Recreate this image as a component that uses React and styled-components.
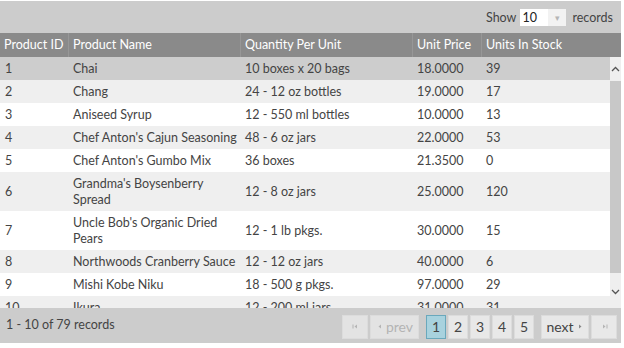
import React from 'react';
import styled, { createGlobalStyle } from 'styled-components';

const GlobalStyle = createGlobalStyle`
  body {
    margin: 0;
    background: #ffffff;
    font-family: Lato, "Open Sans", sans-serif;
  }
`;

const products = [
  { id: 1, name: 'Chai', qty: '10 boxes x 20 bags', price: '18.0000', stock: 39 },
  { id: 2, name: 'Chang', qty: '24 - 12 oz bottles', price: '19.0000', stock: 17 },
  { id: 3, name: 'Aniseed Syrup', qty: '12 - 550 ml bottles', price: '10.0000', stock: 13 },
  { id: 4, name: "Chef Anton's Cajun Seasoning", qty: '48 - 6 oz jars', price: '22.0000', stock: 53 },
  { id: 5, name: "Chef Anton's Gumbo Mix", qty: '36 boxes', price: '21.3500', stock: 0 },
  { id: 6, name: "Grandma's Boysenberry Spread", qty: '12 - 8 oz jars', price: '25.0000', stock: 120 },
  { id: 7, name: "Uncle Bob's Organic Dried Pears", qty: '12 - 1 lb pkgs.', price: '30.0000', stock: 15 },
  { id: 8, name: 'Northwoods Cranberry Sauce', qty: '12 - 12 oz jars', price: '40.0000', stock: 6 },
  { id: 9, name: 'Mishi Kobe Niku', qty: '18 - 500 g pkgs.', price: '97.0000', stock: 29 },
  { id: 10, name: 'Ikura', qty: '12 - 200 ml jars', price: '31.0000', stock: 31 },
];

const COLUMNS = '68px 172px 172px 69px 1fr';

const Arrow = ({ dir = 'right', bar = false }) => (
  <svg width="7" height="7" viewBox="0 0 7 7">
    {dir === 'right' ? (
      <path d="M2 1.5 L4.5 3.5 L2 5.5 Z" fill="currentColor" />
    ) : (
      <path d="M5 1.5 L2.5 3.5 L5 5.5 Z" fill="currentColor" />
    )}
    {bar && (dir === 'right'
      ? <rect x="5.5" y="1.5" width="1" height="4" fill="currentColor" />
      : <rect x="0.5" y="1.5" width="1" height="4" fill="currentColor" />)}
  </svg>
);

const Chevron = ({ up }) => (
  <svg width="9" height="6" viewBox="0 0 9 6">
    <path
      d={up ? 'M1 5 L4.5 1.5 L8 5' : 'M1 1 L4.5 4.5 L8 1'}
      fill="none"
      stroke="#555"
      strokeWidth="1.3"
    />
  </svg>
);

const App = () => {
  return (
    <>
      <GlobalStyle />
      <Grid>
        <Toolbar>
          <span>Show</span>
          <PageSize>
            <SizeValue>10</SizeValue>
            <SizeToggle>▾</SizeToggle>
          </PageSize>
          <span>records</span>
        </Toolbar>
        <HeaderRow>
          <HeaderCell>Product ID</HeaderCell>
          <HeaderCell>Product Name</HeaderCell>
          <HeaderCell>Quantity Per Unit</HeaderCell>
          <HeaderCell>Unit Price</HeaderCell>
          <HeaderCell>Units In Stock</HeaderCell>
        </HeaderRow>
        <Body>
          <Rows>
            {products.map((p, i) => (
              <Row key={p.id} $selected={i === 0} $alt={i % 2 === 1}>
                <Cell>{p.id}</Cell>
                <Cell>{p.name}</Cell>
                <Cell>{p.qty}</Cell>
                <Cell>{p.price}</Cell>
                <Cell>{p.stock}</Cell>
              </Row>
            ))}
          </Rows>
          <Scrollbar>
            <ScrollArrow $h={24}><Chevron up /></ScrollArrow>
            <Track>
              <Thumb />
            </Track>
            <ScrollArrow $h={16}><Chevron /></ScrollArrow>
          </Scrollbar>
        </Body>
        <Footer>
          <Summary>1 - 10 of 79 records</Summary>
          <Pager>
            <PagerGroup>
              <PageButton $disabled $w={26}><Arrow dir="left" bar /></PageButton>
              <PageButton $disabled $w={49}><Arrow dir="left" />prev</PageButton>
            </PagerGroup>
            <PagerGroup>
              {[1, 2, 3, 4, 5].map((n) => (
                <PageButton key={n} $active={n === 1} $w={20}>{n}</PageButton>
              ))}
            </PagerGroup>
            <PagerGroup>
              <PageButton $w={48}>next<Arrow /></PageButton>
              <PageButton $w={26} $faint><Arrow bar /></PageButton>
            </PagerGroup>
          </Pager>
        </Footer>
      </Grid>
    </>
  );
};

const Grid = styled.div`
  width: 621px;
  margin-top: 1px;
  background: #cccccc;
  color: #444444;
  font-size: 12.5px;
  display: flex;
  flex-direction: column;
`;

const Toolbar = styled.div`
  height: 32px;
  display: flex;
  justify-content: flex-end;
  align-items: center;
  gap: 4px;
  padding-right: 8px;
  color: #444444;
`;

const PageSize = styled.div`
  display: flex;
  height: 17px;
  background: #ffffff;
  margin-right: 2px;
`;

const SizeValue = styled.div`
  width: 26px;
  padding-left: 2px;
  line-height: 17px;
  color: #222222;
`;

const SizeToggle = styled.div`
  width: 18px;
  display: flex;
  align-items: center;
  justify-content: center;
  background: #f2f2f2;
  color: #b5b5b5;
  font-size: 9px;
`;

const HeaderRow = styled.div`
  display: grid;
  grid-template-columns: ${COLUMNS};
  height: 24px;
  background: #8a8a8a;
  color: #ffffff;
`;

const HeaderCell = styled.div`
  padding: 0 4px;
  line-height: 24px;
  white-space: nowrap;
  & + & {
    border-left: 1px solid #979797;
  }
`;

const Body = styled.div`
  display: flex;
  height: 251px;
  background: #efefef;
`;

const Rows = styled.div`
  flex: 1;
  overflow: hidden;
`;

const Row = styled.div`
  display: grid;
  grid-template-columns: ${COLUMNS};
  align-items: center;
  background: ${(p) => (p.$selected ? '#cdcdcd' : p.$alt ? '#efefef' : '#ffffff')};
`;

const Cell = styled.div`
  padding: 4px 3px 3px 5px;
  line-height: 16px;
`;

const Scrollbar = styled.div`
  width: 11px;
  display: flex;
  flex-direction: column;
  background: #efefef;
  padding-bottom: 8px;
`;

const ScrollArrow = styled.div`
  height: ${(p) => p.$h}px;
  display: flex;
  align-items: center;
  justify-content: center;
`;

const Track = styled.div`
  flex: 1;
  display: flex;
  align-items: flex-start;
`;

const Thumb = styled.div`
  flex: 1;
  height: 192px;
  background: #c8c8c8;
`;

const Footer = styled.div`
  height: 35px;
  display: flex;
  justify-content: space-between;
  align-items: center;
  padding: 2px 4px 0 6px;
  box-sizing: border-box;
`;

const Summary = styled.span`
  margin-top: -4px;
`;

const Pager = styled.div`
  display: flex;
  gap: 7px;
`;

const PagerGroup = styled.div`
  display: flex;
  gap: 2px;
`;

const PageButton = styled.div`
  box-sizing: border-box;
  width: ${(p) => p.$w}px;
  height: 24px;
  display: flex;
  align-items: center;
  justify-content: center;
  gap: 3px;
  font-size: 14px;
  border: 1px solid ${(p) => (p.$active ? '#6aa8bc' : '#dcdcdc')};
  background: ${(p) => (p.$active ? '#a8d2de' : p.$disabled ? '#e3e3e3' : '#e8e8e8')};
  color: ${(p) => (p.$disabled || p.$faint ? '#b4b4b4' : '#444444')};
  svg {
    color: ${(p) => (p.$disabled || p.$faint ? '#b4b4b4' : '#888888')};
  }
`;

export default App;
